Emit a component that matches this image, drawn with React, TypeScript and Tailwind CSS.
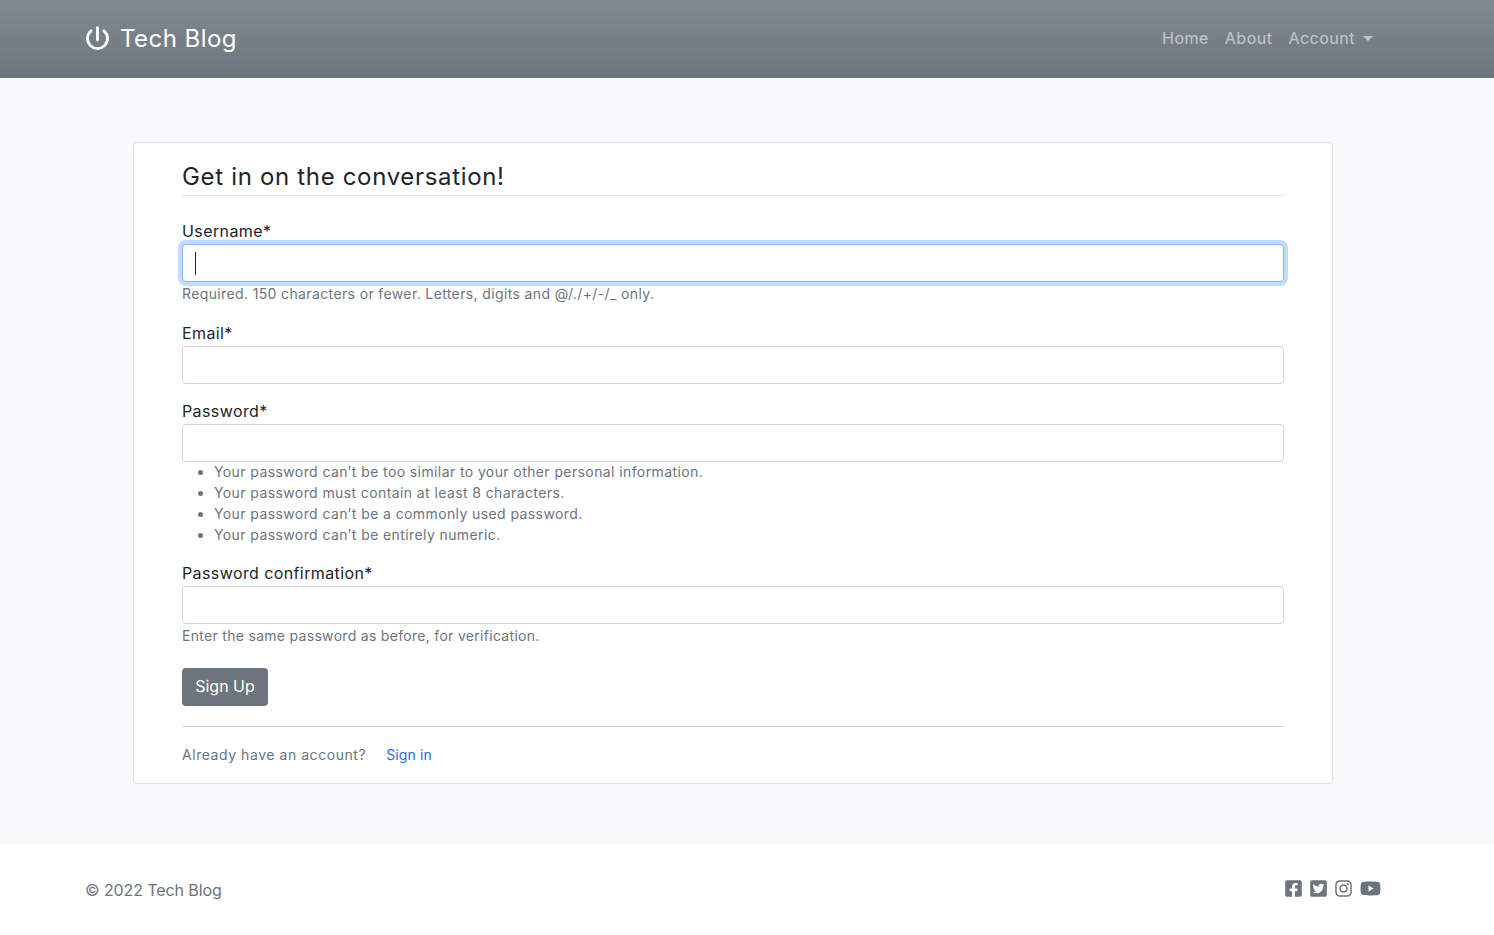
import { FaFacebookSquare, FaTwitterSquare, FaInstagram, FaYoutube } from 'react-icons/fa';

const passwordRules = [
  'Your password can’t be too similar to your other personal information.',
  'Your password must contain at least 8 characters.',
  'Your password can’t be a commonly used password.',
  'Your password can’t be entirely numeric.',
];

const inputClass = 'block h-[38px] w-full rounded border border-[#ced4da] bg-white';

const Label = ({ children }: { children: string }) => (
  <label className="block h-6 text-base leading-[22px] tracking-[0.4px] text-[#212529]">{children}</label>
);

const PowerIcon = () => (
  <svg
    viewBox="0 0 25 25"
    fill="none"
    stroke="currentColor"
    strokeWidth={2.8}
    strokeLinecap="round"
    className="-mt-px h-[25px] w-[25px]"
  >
    <path d="M12.5 1.6V14" />
    <path d="M18.9 4.84A10 10 0 1 1 6.1 4.84" />
  </svg>
);

const App = () => {
  return (
    <div className="min-h-[935px] bg-white font-['Inter',sans-serif]">
      <nav className="flex h-[78px] items-center justify-between bg-gradient-to-b from-[#828a91] to-[#6c757d] pl-[85px] pr-[121px]">
        <a className="flex items-center gap-[10px] text-2xl tracking-[0.45px] text-white">
          <PowerIcon />
          <span>Tech Blog</span>
        </a>
        <ul className="flex items-center gap-4 pb-0.5 text-base tracking-[0.5px] text-white/55">
          <li>Home</li>
          <li>About</li>
          <li className="flex items-center gap-2">
            Account
            <span className="h-0 w-0 border-x-[5px] border-t-[5px] border-x-transparent border-t-white/55" />
          </li>
        </ul>
      </nav>

      <main className="bg-[#f8f9fa] px-[133px] pb-[60px] pt-16">
        <div className="h-[642px] w-[1200px] rounded border border-[#dfe0e1] bg-white px-12">
          <h2 className="flex h-[53px] items-end border-b border-[#dee2e6] pb-[2px] text-2xl tracking-[0.67px] text-[#212529]">
            Get in on the conversation!
          </h2>

          <div className="pt-6">
            <Label>Username*</Label>
            <div className="relative">
              <input className="block h-[38px] w-full rounded border border-[#86b7fe] bg-white caret-transparent shadow-[0_0_0_4px_rgba(13,110,253,0.25)] outline-none" />
              <span className="absolute left-[13px] top-[8px] h-[23px] w-px bg-[#212529]" />
            </div>
            <p className="mt-[1px] h-[23px] text-sm leading-[21px] tracking-[0.37px] text-[#6c757d]">
              Required. 150 characters or fewer. Letters, digits and @/./+/-/_ only.
            </p>
          </div>

          <div className="pt-4">
            <Label>Email*</Label>
            <input className={inputClass} />
          </div>

          <div className="pt-4">
            <Label>Password*</Label>
            <input className={inputClass} />
            <ul className="-mt-px list-disc pb-px pl-8 text-sm leading-[21px] tracking-[0.4px] text-[#6c757d]">
              {passwordRules.map((rule) => (
                <li key={rule}>{rule}</li>
              ))}
            </ul>
          </div>

          <div className="pt-4">
            <Label>Password confirmation*</Label>
            <input className={inputClass} />
            <p className="mt-[1px] h-[23px] text-sm leading-[21px] tracking-[0.3px] text-[#6c757d]">
              Enter the same password as before, for verification.
            </p>
          </div>

          <button className="mt-5 h-[38px] w-[86px] rounded bg-[#6c757d] pb-0.5 text-base text-white">Sign Up</button>

          <div className="mt-5 border-t border-[#cfd0d1] pt-[17px] text-sm leading-[21px] tracking-[0.55px] text-[#6c757d]">
            Already have an account?
            <a className="ml-5 tracking-[0.15px] text-[#2468fb]">Sign in</a>
          </div>
        </div>
      </main>

      <footer className="flex h-[91px] items-center justify-between pl-[85px] pr-[113px] text-[#6c757d]">
        <span className="text-base tracking-[-0.1px]">© 2022 Tech Blog</span>
        <div className="-mt-0.5 flex items-center gap-[6px] text-[19px]">
          <FaFacebookSquare />
          <FaTwitterSquare />
          <FaInstagram />
          <FaYoutube className="ml-px text-[21px]" />
        </div>
      </footer>
    </div>
  );
};

export default App;
